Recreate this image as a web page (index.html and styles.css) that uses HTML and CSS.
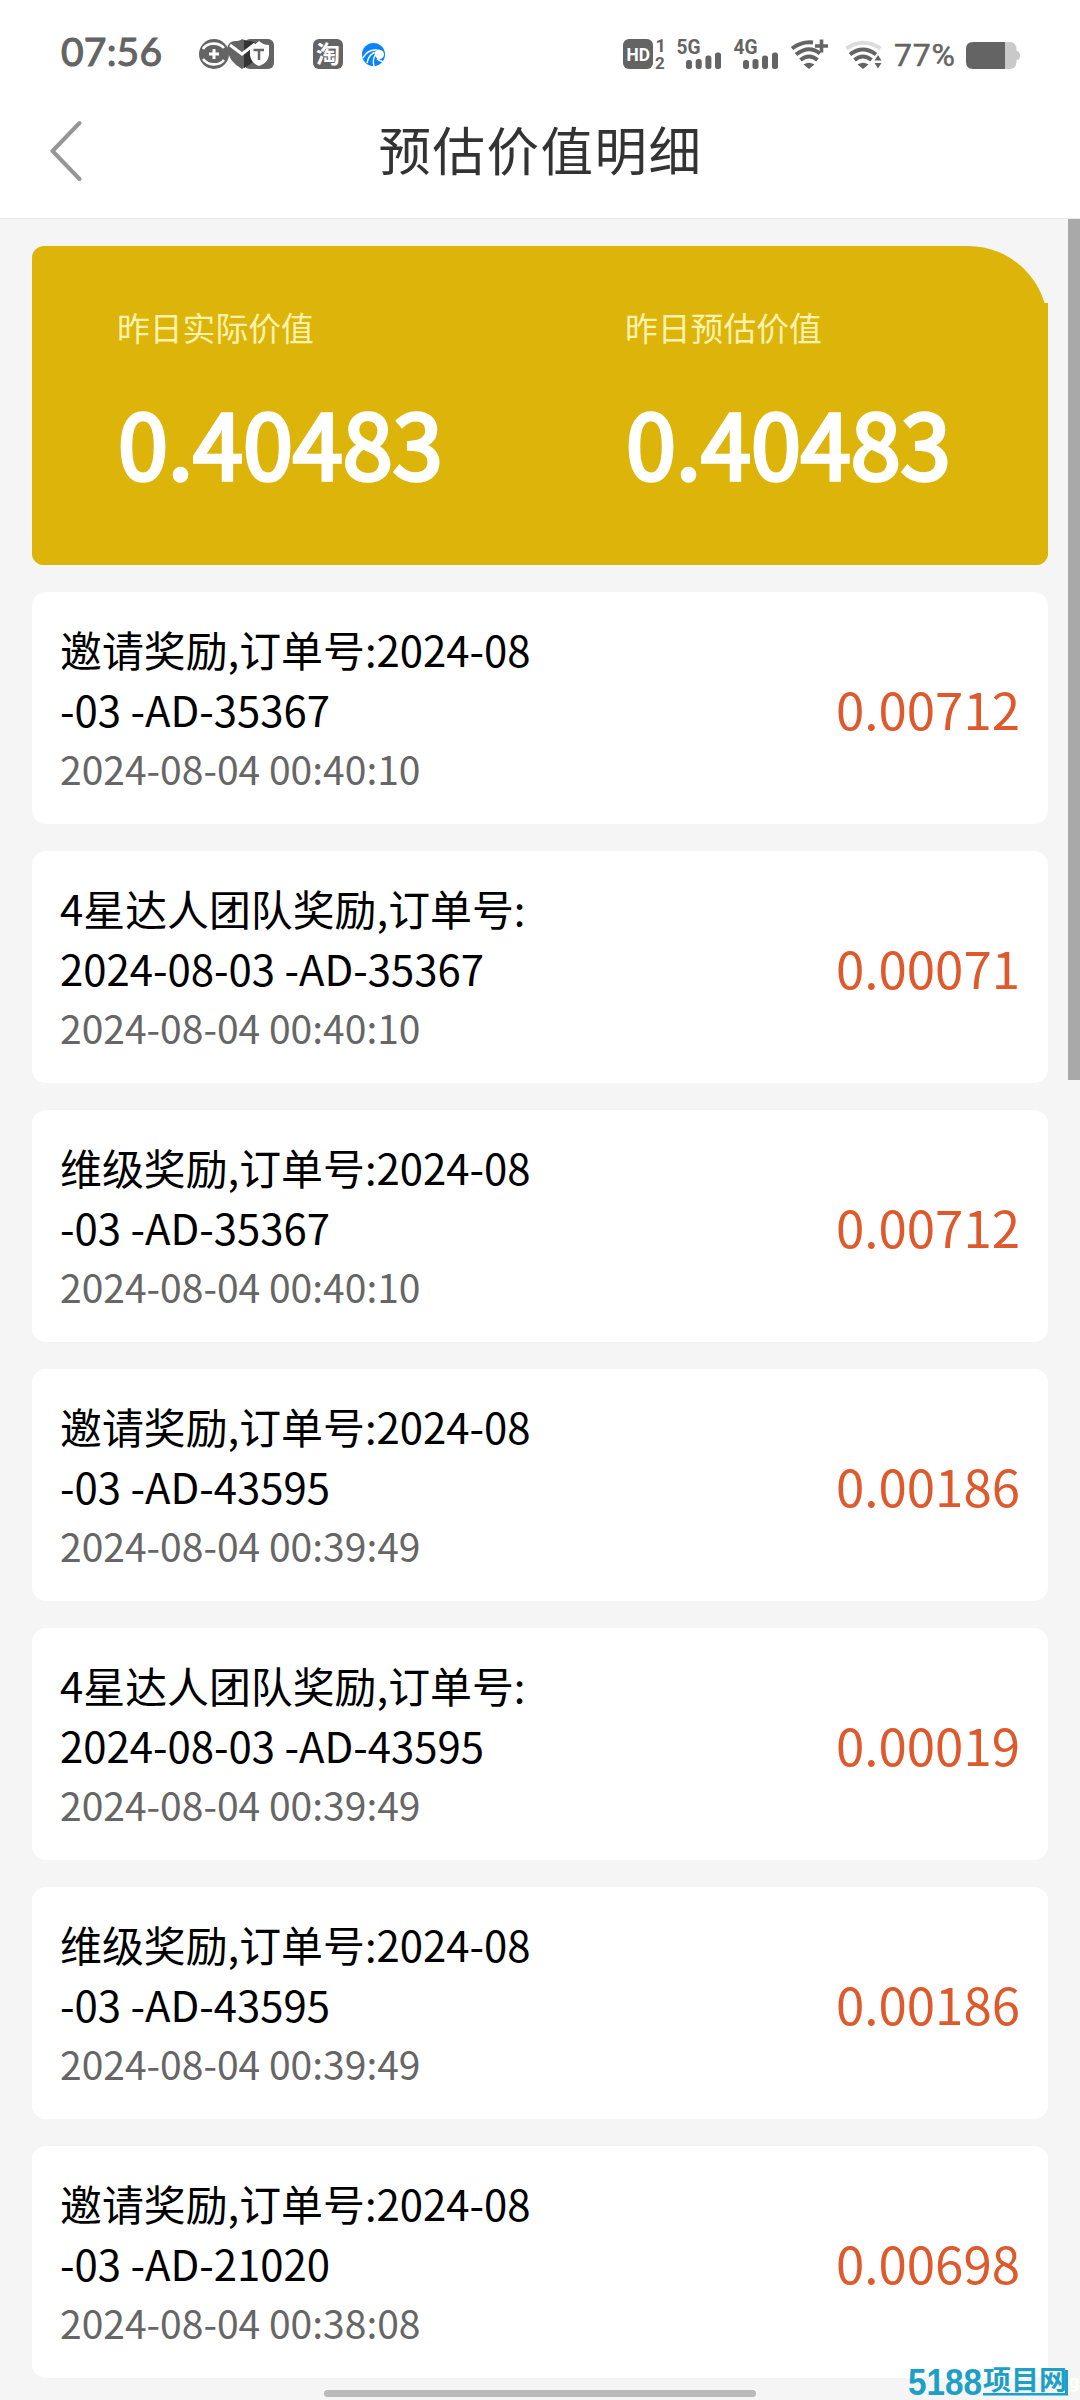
FILE: index.html
```html
<!DOCTYPE html>
<html lang="zh-CN">
<head>
<meta charset="utf-8">
<title>预估价值明细</title>
<link rel="stylesheet" href="styles.css">
</head>
<body>
<div class="screen">
  <header class="top">
    <div class="status">
      <span class="clock">07:56</span>
      <svg class="notices" width="75" height="30" viewBox="0 0 75 30">
        <circle cx="15" cy="15" r="15" fill="#646464"/>
        <path d="M4 10C8 3 20 3 25 9M4 20C9 27 20 27 25 21" fill="none" stroke="#fff" stroke-width="2.600"/>
        <path d="M15 10v10M10 15h10" stroke="#fff" stroke-width="3"/>
        <path d="M28 9Q30 2 36 2Q41 2 43 0Q46 2 51 2Q58 3 60 9Q58 22 43 30Q29 22 28 9Z" fill="#646464"/>
        <rect x="45" y="0" width="30" height="30" rx="6" fill="#646464"/>
        <path d="M45 1Q47 2 51 2Q57 3 60 7L57 19Q52 26 45 29Z" fill="#333"/>
        <path d="M60 2Q64 6 70 6V16Q69 24 60 27Q52 24 51 16V8Q56 6 60 2Z" fill="#fff"/>
        <path d="M54.500 11h10.500M60 11v10" stroke="#646464" stroke-width="2.500"/>
        <path d="M31 6L43 15L56 5" fill="none" stroke="#fff" stroke-width="3"/>
      </svg>
      <span class="shop">淘</span>
      <svg class="swirl" width="23" height="23" viewBox="0 0 23 23">
        <circle cx="11.500" cy="11.500" r="11.500" fill="#0a84f5"/>
        <circle cx="17.500" cy="11.500" r="4.500" fill="#fff"/>
        <path d="M1 15Q6 5 18 7.500M5 20Q7 10 15 9M12 23Q10 16 14 11M15 16L23 20" fill="none" stroke="#fff" stroke-width="1.400"/>
      </svg>
      <svg class="phone" width="148" height="30" viewBox="0 0 148 30">
        <g fill="#646464">
          <rect width="30" height="30" rx="6"/>
          <text class="small" x="32.500" y="13" font-size="18">1</text>
          <text class="small" x="32" y="30" font-size="17">2</text>
          <text class="small" x="53.500" y="14.500" font-size="20" textLength="24" lengthAdjust="spacingAndGlyphs">5G</text>
          <rect x="63" y="21" width="6" height="9" rx="2.500"/><rect x="72.700" y="20" width="6" height="10" rx="2.500"/><rect x="82.400" y="16.500" width="6" height="13.500" rx="2.500"/><rect x="92" y="13.500" width="6" height="16.500" rx="2.500"/>
          <text class="small" x="110.500" y="14.500" font-size="20" textLength="24" lengthAdjust="spacingAndGlyphs">4G</text>
          <rect x="120" y="21" width="6" height="9" rx="2.500"/><rect x="129.500" y="20" width="6" height="10" rx="2.500"/><rect x="139" y="16.500" width="6" height="13.500" rx="2.500"/>
        </g>
        <text class="small" x="3.500" y="21.500" font-size="18.500" fill="#fff" textLength="23.500" lengthAdjust="spacingAndGlyphs">HD</text>
      </svg>
      <svg class="bar" width="6" height="30" viewBox="0 0 6 30"><rect y="13.500" width="6" height="16.500" rx="2.500" fill="#646464"/></svg>
      <svg class="wifi-plus" width="37" height="30" viewBox="0 0 37 30">
        <g fill="none" stroke="#646464" stroke-width="4">
          <path d="M1 9.500Q11 2 22 3.500M5 15.500Q18 5.500 29 14.500M9.500 21Q18 14 26.500 21"/>
          <path d="M30.500 0.500v13M24 7h13" stroke-width="3.600"/>
        </g>
        <path d="M12.500 25.500Q18 22 23.500 25.500L18 30Z" fill="#646464"/>
      </svg>
      <svg class="wifi" width="37" height="30" viewBox="0 0 37 30">
        <path d="M1.500 9.500Q18 -2 35.500 9.500" fill="none" stroke="#dcdcdc" stroke-width="4"/>
        <path d="M5 15.500Q18 5.500 31 15.500M9.500 21Q18 14 26.500 21" fill="none" stroke="#646464" stroke-width="4"/>
        <path d="M12.500 25.500Q18 22 23.500 25.500L18 30Z" fill="#646464"/>
        <path d="M29.500 21.500L33 16L36.500 21.500ZM29.500 24L33 29.500L36.500 24Z" fill="#646464"/>
      </svg>
      <span class="percent">77%</span>
      <svg class="battery" width="54" height="27" viewBox="0 0 54 27">
        <path d="M39 0H44Q50.500 0 50.500 8V9Q54 9 54 13.500Q54 18 50.500 18V19Q50.500 27 44 27H39Z" fill="#c9c9c9"/>
        <path d="M39 0H7Q0 0 0 7V20Q0 27 7 27H39Z" fill="#646464"/>
      </svg>
    </div>
    <nav class="nav">
      <svg class="back" width="34" height="62" viewBox="0 0 34 62"><path d="M29.500 3L2.500 31L29.500 59" fill="none" stroke="#969696" stroke-width="4" stroke-linecap="round" stroke-linejoin="round"/></svg>
      <h1 class="title">预估价值明细</h1>
    </nav>
  </header>
  <main class="content">
    <section class="summary">
      <div class="stat"><span class="stat-label">昨日实际价值</span><span class="stat-value">0.40483</span></div>
      <div class="stat"><span class="stat-label">昨日预估价值</span><span class="stat-value">0.40483</span></div>
    </section>
    <article class="item"><div><p class="name">邀请奖励,订单号:2024-08<br>-03 -AD-35367</p><p class="date">2024-08-04 00:40:10</p></div><span class="value">0.00712</span></article>
    <article class="item"><div><p class="name">4星达人团队奖励,订单号:<br>2024-08-03 -AD-35367</p><p class="date">2024-08-04 00:40:10</p></div><span class="value">0.00071</span></article>
    <article class="item"><div><p class="name">维级奖励,订单号:2024-08<br>-03 -AD-35367</p><p class="date">2024-08-04 00:40:10</p></div><span class="value">0.00712</span></article>
    <article class="item"><div><p class="name">邀请奖励,订单号:2024-08<br>-03 -AD-43595</p><p class="date">2024-08-04 00:39:49</p></div><span class="value">0.00186</span></article>
    <article class="item"><div><p class="name">4星达人团队奖励,订单号:<br>2024-08-03 -AD-43595</p><p class="date">2024-08-04 00:39:49</p></div><span class="value">0.00019</span></article>
    <article class="item"><div><p class="name">维级奖励,订单号:2024-08<br>-03 -AD-43595</p><p class="date">2024-08-04 00:39:49</p></div><span class="value">0.00186</span></article>
    <article class="item"><div><p class="name">邀请奖励,订单号:2024-08<br>-03 -AD-21020</p><p class="date">2024-08-04 00:38:08</p></div><span class="value">0.00698</span></article>
  </main>
  <div class="scrollbar"></div>
  <div class="home-bar"></div>
  <svg class="watermark" width="172" height="34" viewBox="0 0 172 34">
    <g fill="#1d9fc6">
      <text class="mark-num" x="0" y="29" font-size="37" textLength="74" lengthAdjust="spacingAndGlyphs">5188</text>
      <text class="mark-cn" x="75" y="24" font-size="27" textLength="84" lengthAdjust="spacingAndGlyphs">项目网</text>
      <path d="M75 27H157V4H160V29.500H75Z"/>
    </g>
    <text class="small" x="161" y="22" font-size="18" fill="#fff">g</text>
  </svg>
</div>
</body>
</html>
```
FILE: styles.css
```css
* { box-sizing: border-box; margin: 0; padding: 0; }
body { background: #f5f5f5; font-family: "Noto Sans CJK SC", sans-serif; }
.screen { position: relative; width: 1080px; height: 2400px; overflow: hidden; background: #f5f5f5; }
.top { height: 219px; background: #fff; border-bottom: 1px solid #ebebeb; }
.status { height: 84px; padding: 39px 0 0 61px; display: flex; align-items: flex-start; color: #646464; }
.status svg { flex: none; display: block; overflow: visible; }
.clock { width: 138px; margin-top: -11px; font: 400 39px/47px Lato, sans-serif; letter-spacing: 0.2px; -webkit-text-stroke: 1.1px #646464; }
.shop { width: 30px; height: 30px; margin-left: 39px; border-radius: 6px; background: #646464; color: #fff; font-size: 24px; font-weight: 700; line-height: 28px; text-align: center; }
.swirl { margin: 4px 0 0 19px; }
.phone { margin-left: 238px; }
.bar { margin-left: 1px; }
.wifi-plus { margin-left: 13px; }
.wifi { margin-left: 17px; }
.percent { width: 72px; margin: -3px 0 0 12px; font: 400 32px/38px Roboto, sans-serif; letter-spacing: 0.8px; -webkit-text-stroke: 0.5px #646464; }
.battery { margin-top: 3px; }
.small { font-family: Roboto, sans-serif; font-weight: 700; }
.nav { height: 134px; padding: 0 50px; display: grid; grid-template-columns: 34px 1fr 34px; align-items: center; }
.title { padding-left: 1px; font-size: 52.5px; font-weight: 400; line-height: 78px; letter-spacing: 1.5px; text-align: center; color: #333; margin-top: -7px; }
.content { padding: 27px 32px 0; display: flex; flex-direction: column; gap: 27px; }
.summary { position: relative; isolation: isolate; height: 319px; padding: 57px 0 57px 85px; display: grid; grid-template-columns: 508px 1fr; border-radius: 12px 80px 12px 12px; background: #dcb40a; }
.summary::before { content: ""; position: absolute; z-index: -1; inset: 57px 0 0; border-radius: 0 0 12px 12px; background: #dcb40a; }
.stat { display: flex; flex-direction: column; gap: 25px; }
.stat-label { font-size: 32.8px; line-height: 48px; color: #fff2ac; }
.stat-value { padding-left: 1px; font-size: 90px; line-height: 130px; color: #fff; -webkit-text-stroke: 3.6px #fff; }
.item { height: 232px; padding: 0 28px 1px 28px; display: flex; align-items: center; justify-content: space-between; border-radius: 14px; background: #fff; }
.name { font-size: 41.9px; line-height: 60.5px; color: #000; }
.date { font-size: 39px; line-height: 56.5px; color: #666; }
.value { font-size: 51px; line-height: 74px; color: #de5a2c; }
.scrollbar { position: absolute; right: 0; top: 219px; width: 12px; height: 861px; background: #a9a9a9; }
.home-bar { position: absolute; left: 324px; top: 2390px; width: 432px; height: 7px; border-radius: 4px; background: #b9b9b9; }
.watermark { position: absolute; left: 908px; top: 2366px; overflow: visible; }
.mark-num { font-family: "Liberation Sans", sans-serif; font-weight: 700; }
.mark-cn { font-family: "Noto Sans CJK SC", sans-serif; font-weight: 700; }
```
